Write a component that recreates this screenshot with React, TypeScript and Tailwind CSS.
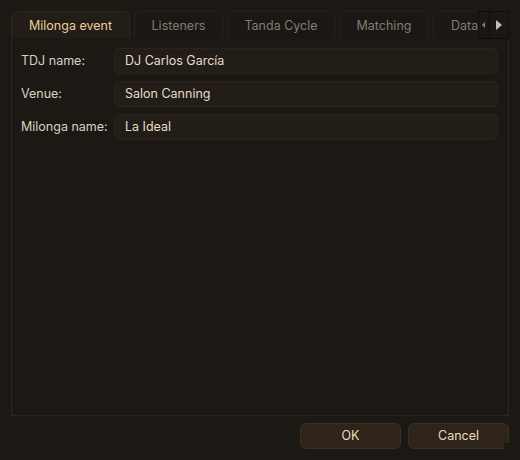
import { useState } from 'react'

const tabs = [
  { name: 'Milonga event', w: 'w-[119px]' },
  { name: 'Listeners', w: 'w-[89px]' },
  { name: 'Tanda Cycle', w: 'w-[108px]' },
  { name: 'Matching', w: 'w-[90px]' },
  { name: 'Data', w: 'w-[80px] text-left pl-[17px]' },
]

const fields = [
  { label: 'TDJ name:', value: 'DJ Carlos García' },
  { label: 'Venue:', value: 'Salon Canning' },
  { label: 'Milonga name:', value: 'La Ideal' },
]

export default function App() {
  const [active, setActive] = useState(0)

  return (
    <div
      className="w-[520px] h-[460px] bg-[#1c1915] flex flex-col overflow-hidden text-[12.5px]"
      style={{ fontFamily: 'Inter, "Noto Sans", sans-serif' }}
    >
      {/* Tab bar */}
      <div className="flex items-end pl-[11px] pt-[11px] h-[38px] relative">
        <div className="flex gap-[4px] overflow-hidden w-[467px]">
          {tabs.map((t, i) => (
            <button
              key={t.name}
              onClick={() => setActive(i)}
              className={
                'shrink-0 h-[27px] pt-[2px] rounded-t-[6px] border border-b-0 ' +
                t.w +
                (i === active
                  ? ' border-[#2c261d] bg-[#221d17] text-[#e9cf98]'
                  : ' border-[#24201a] bg-[#1a1714] text-[#857b6e]')
              }
            >
              {t.name}
            </button>
          ))}
        </div>
        <div className="absolute left-[478px] top-[11px] w-[31px] h-[28px] flex items-center bg-[#1a1714] border border-[#0f0d0b]">
          <span className="w-[10px] flex justify-center">
            <svg width="4" height="6" viewBox="0 0 4 6"><path d="M3 0L0 3l3 3z" fill="#8a8070" /></svg>
          </span>
          <span className="w-[1px] h-full bg-[#0f0d0b]" />
          <span className="flex-1 flex justify-center">
            <svg width="6" height="10" viewBox="0 0 6 10"><path d="M0 0l6 5-6 5z" fill="#c9bfae" /></svg>
          </span>
        </div>
      </div>

      {/* Panel */}
      <div className="ml-[11px] w-[498px] h-[378px] border-l border-r border-b border-[#2a251d] bg-[#1c1915] pt-[10px] pl-[9px] pr-[10px] flex flex-col gap-[7px]">
        {fields.map((f) => (
          <div key={f.label} className="flex items-center">
            <label className="w-[93px] text-[#d9d0c1]">{f.label}</label>
            <div className="flex-1 h-[26px] rounded-[5px] border border-[#2a231a] bg-[#231d17] flex items-center pl-[10px] pt-[1px] text-[#e4dccd]">
              {f.value}
            </div>
          </div>
        ))}
      </div>

      {/* Buttons */}
      <div className="flex justify-end gap-[7px] pr-[11px] pt-[7px] relative">
        <button className="w-[101px] h-[26px] rounded-[6px] border border-[#3a2f22] bg-[#2e241a] text-[#ecdcc0]">
          OK
        </button>
        <button className="w-[101px] h-[26px] rounded-[6px] border border-[#3a2f22] bg-[#2e241a] text-[#ecdcc0]">
          Cancel
        </button>
        <div className="absolute right-[11px] top-[27px] w-[5px] h-[7px] bg-[#1c1915]" />
      </div>
    </div>
  )
}
